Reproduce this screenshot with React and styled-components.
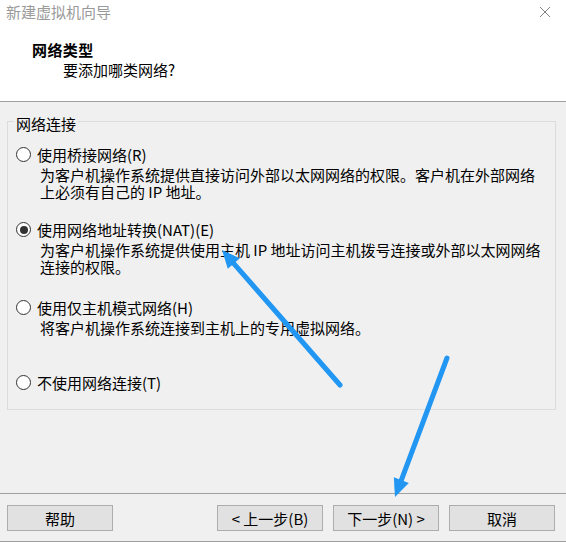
import React, { useState } from "react";
import styled, { createGlobalStyle } from "styled-components";

const GlobalStyle = createGlobalStyle`
    html, body {
        margin: 0;
        padding: 0;
        background: #f0f0f0;
    }
    body {
        font-family: "Noto Sans CJK SC", "Liberation Sans", sans-serif;
        font-size: 15px;
        color: #000;
    }
`;

const options = [
    {
        id: "bridge",
        label: "使用桥接网络(R)",
        desc: ["为客户机操作系统提供直接访问外部以太网网络的权限。客户机在外部网络", "上必须有自己的 IP 地址。"],
        space: 21,
    },
    {
        id: "nat",
        label: "使用网络地址转换(NAT)(E)",
        desc: ["为客户机操作系统提供使用主机 IP 地址访问主机拨号连接或外部以太网网络", "连接的权限。"],
        space: 24,
    },
    {
        id: "host",
        label: "使用仅主机模式网络(H)",
        desc: ["将客户机操作系统连接到主机上的专用虚拟网络。"],
        space: 38,
    },
    {
        id: "none",
        label: "不使用网络连接(T)",
        desc: [],
        space: 0,
    },
];

const Arrow = ({ tail, tip }) => {
    // arrow head is drawn as a triangle at the tip, the line stops at its base
    const dx = tip[0] - tail[0];
    const dy = tip[1] - tail[1];
    const len = Math.hypot(dx, dy);
    const ux = dx / len;
    const uy = dy / len;
    const bx = tip[0] - 18 * ux;
    const by = tip[1] - 18 * uy;
    const px = -uy * 8;
    const py = ux * 8;
    return (
        <>
            <line
                x1={tail[0]}
                y1={tail[1]}
                x2={bx + ux * 2}
                y2={by + uy * 2}
                stroke="#2196f3"
                strokeWidth="5"
                strokeLinecap="round"
            />
            <polygon
                points={`${tip[0]},${tip[1]} ${bx + px},${by + py} ${bx - px},${by - py}`}
                fill="#2196f3"
            />
        </>
    );
};

export default function App() {
    const [selected, setSelected] = useState("nat");

    return (
        <Window>
            <GlobalStyle />
            <Header>
                <TitleBar>
                    <WindowTitle>新建虚拟机向导</WindowTitle>
                    <CloseButton>
                        <svg width="12" height="12" viewBox="0 0 12 12">
                            <path d="M1 1 L11 11 M11 1 L1 11" stroke="#808080" strokeWidth="1" fill="none" />
                        </svg>
                    </CloseButton>
                </TitleBar>
                <HeadText>
                    <PageTitle>网络类型</PageTitle>
                    <PageSubtitle>要添加哪类网络?</PageSubtitle>
                </HeadText>
            </Header>

            <Body>
                <GroupBox>
                    <Legend>网络连接</Legend>
                    <OptionList>
                        {options.map((opt) => (
                            <Option key={opt.id} $space={opt.space}>
                                <RadioRow onClick={() => setSelected(opt.id)}>
                                    <Radio $checked={selected === opt.id} />
                                    <span>{opt.label}</span>
                                </RadioRow>
                                {opt.desc.length > 0 && (
                                    <Desc>
                                        {opt.desc.map((line) => (
                                            <div key={line}>{line}</div>
                                        ))}
                                    </Desc>
                                )}
                            </Option>
                        ))}
                    </OptionList>
                </GroupBox>
            </Body>

            <Footer>
                <Button>帮助</Button>
                <NavButtons>
                    <Button>&lt; 上一步(B)</Button>
                    <Button>下一步(N) &gt;</Button>
                    <Button>取消</Button>
                </NavButtons>
            </Footer>

            <Overlay width="566" height="542" viewBox="0 0 566 542">
                <Arrow tail={[340, 385]} tip={[222, 250]} />
                <Arrow tail={[447, 358]} tip={[395, 497]} />
            </Overlay>
        </Window>
    );
}

const Window = styled.div`
    position: relative;
    width: 566px;
    height: 542px;
    display: flex;
    flex-direction: column;
    background: #f0f0f0;
    box-sizing: border-box;
    border-bottom: 1px solid #a0a0a0;
    overflow: hidden;
`;

const Header = styled.div`
    height: 101px;
    background: #ffffff;
    border-bottom: 1px solid #a0a0a0;
    flex-shrink: 0;
`;

const TitleBar = styled.div`
    height: 24px;
    display: flex;
    align-items: center;
    justify-content: space-between;
    padding: 0 15px 0 6px;
`;

const WindowTitle = styled.span`
    color: #9a9a9a;
    font-size: 15px;
    line-height: 17px;
    margin-top: -1px;
`;

const CloseButton = styled.div`
    width: 12px;
    height: 12px;
    display: flex;
`;

const HeadText = styled.div`
    padding: 17px 0 0 32px;
`;

const PageTitle = styled.div`
    font-weight: bold;
    line-height: 17px;
    letter-spacing: 0.4px;
`;

const PageSubtitle = styled.div`
    margin: 3px 0 0 31px;
    line-height: 17px;
`;

const Body = styled.div`
    flex: 1;
    padding: 8px 10px 0 7px;
`;

const GroupBox = styled.fieldset`
    margin: 0;
    padding: 0 0 16px 0;
    border: 1px solid #dcdcdc;
    height: 300px;
    box-sizing: border-box;
    min-width: 0;
`;

const Legend = styled.legend`
    margin-left: 6px;
    padding: 5px 2px 0 2px;
    line-height: 17px;
`;

const OptionList = styled.div`
    display: flex;
    flex-direction: column;
    padding-top: 14px;
`;

const Option = styled.div`
    display: flex;
    flex-direction: column;
    margin-bottom: ${(p) => p.$space}px;
`;

const RadioRow = styled.div`
    display: flex;
    align-items: center;
    gap: 6px;
    padding-left: 8px;
    line-height: 17px;
    cursor: default;
`;

const Radio = styled.span`
    width: 15px;
    height: 15px;
    box-sizing: border-box;
    border-radius: 50%;
    border: 1px solid #333333;
    background: #ffffff;
    display: flex;
    align-items: center;
    justify-content: center;
    flex-shrink: 0;

    &::after {
        content: "";
        width: 8px;
        height: 8px;
        border-radius: 50%;
        background: #333333;
        display: ${(p) => (p.$checked ? "block" : "none")};
    }
`;

const Desc = styled.div`
    margin-top: 3px;
    padding-left: 32px;
    line-height: 17px;
    white-space: nowrap;
`;

const Footer = styled.div`
    height: 48px;
    box-sizing: border-box;
    flex-shrink: 0;
    border-top: 1px solid #a0a0a0;
    display: flex;
    align-items: flex-start;
    justify-content: space-between;
    padding: 11px 11px 0 7px;
`;

const NavButtons = styled.div`
    display: flex;
    gap: 10px;
`;

const Button = styled.button`
    width: 106px;
    height: 26px;
    box-sizing: border-box;
    border: 1px solid #adadad;
    background: #e1e1e1;
    font-family: "Noto Sans CJK SC", "Liberation Sans", sans-serif;
    font-size: 15px;
    line-height: 17px;
    color: #000;
    padding: 0;
`;

const Overlay = styled.svg`
    position: absolute;
    left: 0;
    top: 0;
    pointer-events: none;
`;
